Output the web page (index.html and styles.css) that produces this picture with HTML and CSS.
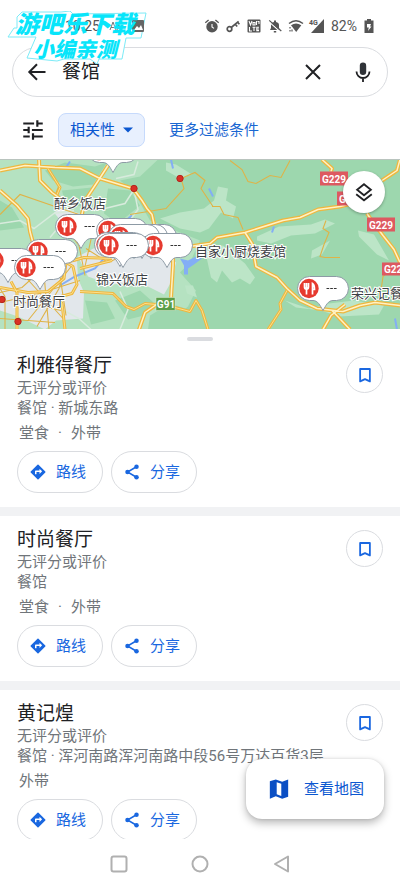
FILE: index.html
```html
<!DOCTYPE html>
<html lang="zh-CN">
<head>
<meta charset="utf-8">
<meta name="viewport" content="width=device-width, initial-scale=1">
<title>餐馆</title>
<link rel="stylesheet" href="styles.css">
</head>
<body>
<svg class="defs" aria-hidden="true">
  <defs>
    <symbol id="i-directions" viewBox="0 0 24 24"><path d="M21.7 11.3l-9-9a1 1 0 0 0-1.4 0l-9 9a1 1 0 0 0 0 1.4l9 9a1 1 0 0 0 1.4 0l9-9a1 1 0 0 0 0-1.4zM14 14.5V12h-4v3H8v-4c0-.6.4-1 1-1h5V7.500l3.500 3.500z" fill="currentColor"/></symbol>
    <symbol id="i-share" viewBox="0 0 24 24"><path d="M18 5L6 12l12 7" fill="none" stroke="currentColor" stroke-width="2"/><g fill="currentColor"><circle cx="18" cy="5" r="3"/><circle cx="6" cy="12" r="3"/><circle cx="18" cy="19" r="3"/></g></symbol>
    <symbol id="i-bookmark" viewBox="0 0 24 24"><path d="M5.500 4h13v16.500l-6.500-3-6.500 3z" fill="none" stroke="currentColor" stroke-width="2.400" stroke-linejoin="round"/></symbol>
    <g id="pin">
      <path d="M.5-12H27.500a12 12 0 0 1 0 24H24C19 12 17 17 14 22 11 17 9 12 4 12H.5a12 12 0 0 1 0-24z" fill="#fff" stroke="#8d9aa5"/>
      <circle r="9.700" fill="#e63a2f"/>
      <path d="M-4.500-5.500v4q0 2 2 2t2-2v-4M-2.500-5.500V6M3.500 6V-5q2 1 2 6h-2" fill="none" stroke="#fff" stroke-width="1.700"/>
      <path d="M17.500 0h2.700m1 0h2.700m1 0h2.700" stroke="#333" stroke-width="1.200"/>
    </g>
    <path id="roads" d="M0 170L25 165 55 167 80 168 100 178 133 188 142 200 147 208 152 214 155 228M39 159L40 180 52 192 60 198 65 207M108 165L97 182 85 200 79 227M0 190L17 205 28 218 30 231 34 246M190 246L210 243 217 237 245 232 283 220 300 217 318 209 340 206 360 201M367 213L371 219 383 235 394 249 400 262M382 180L397 170 400 159M245 232L252 243 256 266 277 277 287 288 300 300 317 308 343 311 360 305 375 302 400 305M332 310L350 329M323 329L331 315 345 304M173 255V265L171 298M158 303L145 312 139 329M322 159L332 168 331 171"/>
    <path id="streets" d="M287 290L280 303 281 309 268 329M80 291L113 293 126 306 134 309 145 303 156 304M175 307L190 311 196 300 202 310 208 329M11 281L17 292 17 329M0 287L28 292 48 291 64 278 66 262 84 257 112 258M66 262L73 266 77 284 72 293 57 297 62 303 65 329M80 268L112 260M48 168L60 187 57 194"/>
  </defs>
</svg>

<header class="header">
  <div class="status">
    <span class="time">10:25</span>
    <svg class="glyph status-text-icon" viewBox="0 0 14 14"><path d="M1 11L4 3l3 8M2 8.500h4M8 11l2-5 2 5M9 9.500h2.500" fill="none" stroke="#777"/></svg>
    <svg class="glyph status-picture" viewBox="0 0 14 14"><rect x="1" y="1" width="12" height="12" rx="1" fill="#666"/><path d="M3 11l3-4 2 2 2-3 2 5z" fill="#fff"/></svg>
    <div class="status-icons">
      <svg class="glyph" viewBox="0 0 14 14"><circle cx="7" cy="7.800" r="5.700" fill="#555"/><path d="M7 5v3l2 1.400" fill="none" stroke="#fff" stroke-width="1.100"/><path d="M.3 3.800L3.600 1M13.700 3.800L10.400 1" stroke="#555" stroke-width="1.300"/></svg>
      <svg class="glyph" viewBox="0 0 14 14"><g fill="none" stroke="#555" stroke-width="1.700"><circle cx="3.500" cy="10" r="2.300"/><path d="M5.200 8.500L12.600 2.300M9.200 5.200l2 2.300M11.600 3.200l1.800 2"/></g></svg>
      <svg class="glyph" viewBox="0 0 14 14"><rect x=".5" y=".5" width="13" height="13" rx="1" fill="#555"/><g fill="none" stroke="#fff" stroke-width="1.100"><path d="M2 2l1.500 4L5 2M6 3.500h2V6H6zM9.500 2v4M10.500 2.500H12V5M2.500 8v4H5M5.500 8.300h3M7 8v4M12 8.300H9.800v3.300H12M10 10h2"/></g></svg>
      <svg class="glyph" viewBox="0 0 14 14"><path d="M2 11h10l-1-2V6Q11 3.500 8 3V1.500H6V3Q3 3.500 3 6v3zM5.800 12h2.400v1.500H5.800z" fill="#555"/><path d="M.8 2.600L12.600 13" stroke="#fff" stroke-width="1.200"/><path d="M1.200 1.400L13.300 12" stroke="#555" stroke-width="1.200"/></svg>
      <svg class="glyph" viewBox="0 0 14 14"><path d="M0 4.500Q7-1 14 4.500" fill="none" stroke="#555" stroke-width="1.500"/><path d="M2 6.300Q7 2.500 12.300 6.300L7.200 13z" fill="#555"/><path d="M1 8v1.500M1 11v1.500M3 10.500v2" stroke="#555" stroke-width="1.200"/></svg>
      <svg class="glyph" viewBox="0 0 14 14"><path d="M14 0v14H1z" fill="#555"/><text class="net-label" x="-1" y="5.500">4G</text></svg>
      <span class="battery-text">82%</span>
      <svg class="glyph battery" viewBox="0 0 10 14"><path d="M3 0h4v1.500h2.500V14H.5V1.500H3z" fill="#555"/><path d="M3 5h4L6 7.500h1.500L4 12l.8-3.500H3z" fill="#fff"/></svg>
    </div>
  </div>

  <form class="search">
    <button type="button" class="icon-btn" aria-label="返回"><svg viewBox="0 0 24 24"><path d="M20.500 12H4.500M12 4.300L4.300 12l7.700 7.700" fill="none" stroke="#202124" stroke-width="2"/></svg></button>
    <input class="search-input" type="text" value="餐馆" aria-label="搜索">
    <button type="button" class="icon-btn" aria-label="清除"><svg viewBox="0 0 24 24"><path d="M5 5l14 14M19 5L5 19" stroke="#202124" stroke-width="2"/></svg></button>
    <button type="button" class="icon-btn" aria-label="语音搜索"><svg viewBox="0 0 24 24"><rect x="8.800" y="2.500" width="6.400" height="12.500" rx="3.200" fill="#303338"/><path d="M5.500 11.500a6.500 6.500 0 0 0 13 0M12 18v4" fill="none" stroke="#202124" stroke-width="1.800"/></svg></button>
  </form>

  <div class="filters">
    <button type="button" class="icon-btn tune" aria-label="过滤条件"><svg viewBox="0 0 24 24"><path d="M3 6h10M17 6h4M16 3v6M3 12h4M8 9v6M11 12h10M3 18h6M12 15v6M12 18h9" fill="none" stroke="#202124" stroke-width="2"/></svg></button>
    <div class="chip">
      <select class="chip-select" aria-label="排序方式"><option>相关性</option></select>
      <svg class="chip-arrow" viewBox="0 0 10 6"><path d="M0 .5h10L5 5.500z" fill="#0b57d0"/></svg>
    </div>
    <a class="more" href="#more">更多过滤条件</a>
  </div>

  <div class="watermark">
    <svg class="watermark-edge" viewBox="0 0 142 56"><path d="M10 6L15 1H54L63 0L66 3L139 2L134 27H119L115 48H92L90 53L83 48L57 48L50 50L20 47L29 26H1L7 17H10z" fill="#fff" stroke="#7cebf7" stroke-width="1"/></svg>
  </div>
  <div class="watermark watermark-text">
    <span class="wm-large">游吧乐下载</span>
    <span class="wm-small">小编亲测</span>
  </div>
</header>

<section class="map" aria-label="地图">
  <svg class="map-canvas" viewBox="0 159 400 170" preserveAspectRatio="xMidYMid slice">
    <rect y="159" width="400" height="170" fill="#9dd7ae"/>
    <path d="M0 159H158L140 176L120 180L133 190L150 220L200 240L190 262L180 272L196 290L188 306L160 329H0z" fill="#b5e2c1"/>
    <g fill="#9dd7ae">
      <path d="M45 170l20-8 30 4 12-4-14 22-20 2-20-6zM62 190l30-3-8 18-18 2zM0 200l12 7 12 20-24 3zM108 188l22 2 10 15-22 18-14-10zM142 200l20-10 38-12v60l-36-12zM115 300l25-10 18 16-18 10-12 3zM150 315l20-12 30 10v16h-52zM85 300l22 2 8 16-24 6z"/>
    </g>
    <g fill="#bce5c7">
      <path d="M160 218l20-6 24-4 10-8 4-14 10 2-2 12 10 6-3 12-12-6-12 16-9 4-20-4zM257 236l22-10 32-2 14-5 10 4-20 10-24 2-20 8-14-3zM205 250l18-5 22 18 10 14-5 7-10-6-8 4-10-12-5 12-6-5zM312 250l18-10-8 14-11 4zM358 230l16 4 15 26-12-6-18-18zM285 300l24 8 20-5 25-3 30 5-5 9-40 2-18-6-25-3zM166 162l10 2 16 10-12 4-14-8zM185 285l8 0 4 12-10-4z"/>
    </g>
    <g fill="#e2e7eb">
      <path d="M0 252L40 252 77 260 78 278 84 292 83 318 56 320 45 329 18 316 0 310z"/>
      <path d="M78 256L105 242H150L166 255L176 262L172 280L164 294L140 282L110 284L88 276z"/>
      <path d="M54 212l8-5 20 7 8 12-16 4-12-8z"/>
    </g>
    <g fill="none" stroke="#83aef5" stroke-width="2"><path d="M60 285l15-9 20-8 18-20 16-10M66 167l4-6M126 220l6-5M171 159l2 9"/><path d="M180 258l8 2 8-4 6 2-8 6-6 4v6h-4v-9z" fill="#83aef5" stroke="none"/><path d="M209 188l4 8M272 232l2-6M395 318l2 11"/></g>
    <g fill="none" stroke="#d8ebdd" stroke-width="1.500"><path d="M0 223l20-3 14 8 20-15 20-3M116 178l18-4 4-13M105 208l20-5 9-14 4 20-12 16M64 310l15 8 12 11M120 291l8 18-8 20M60 225l-10 12"/></g>
    <g fill="none" stroke="#dfb347" stroke-width="1.100">
      <path d="M0 214l20-20 35 12 30 10M48 170l11 15-4 10M130 214l36-6 18-20-3-10M181 178l14-6 10 8-4 8 12 18M230 160l12 9 6 12 8 2 14-8 11 2 9-17M212 206l8 0 4 8 14 3 5 12M326 220l-3 8 6 4-5 12-4 12 5 1h15M381 290l2-14 8-8"/>
      <path d="M0 292l22-5 21-19 34-18M5 329V296l-5-8M0 318l55 4M16 300l45 10M42 252l7 77M25 276l38 42M28 320l44-55M0 270l77-10M58 262l8 53M69 252l-10 36-22 38M80 280l-44 14-36 8M70 233l9 12 6 30M86 248l22 14 30-13M93 230l-8 36"/>
    </g>
    <g fill="none" stroke-linejoin="round">
      <use href="#streets" stroke="#eeb73f" stroke-width="3"/>
      <use href="#roads" stroke="#eeb73f" stroke-width="4"/>
      <use href="#streets" stroke="#fbe08d" stroke-width="1"/>
      <use href="#roads" stroke="#fff2c4" stroke-width="1.500"/>
    </g>
    <g fill="#d93025" stroke="#b3261e"><circle cx="134" cy="188" r="3.200"/><circle cx="180" cy="178" r="3.200"/><circle cx="2" cy="299" r="3.200"/><circle cx="18" cy="321" r="3.200"/></g>

    <g fill="#dd5960"><rect x="320" y="171" width="28" height="14"/><rect x="337" y="191" width="28" height="14"/><rect x="367" y="217" width="28" height="14"/><rect x="382" y="262" width="28" height="13"/></g>
    <rect x="156" y="297" width="19" height="13" fill="#5a9e48" stroke="#d9ead3" stroke-width=".5"/>
    <g class="shield-text"><text x="334" y="182">G229</text><text x="351" y="202">G229</text><text x="381" y="228">G229</text><text x="396" y="272">G229</text><text x="166" y="307">G91</text></g>

    <use href="#pin" x="99" y="150"/>
    <use href="#pin" x="67" y="226"/>
    <use href="#pin" x="108" y="230"/>
    <use href="#pin" x="137" y="236"/>
    <use href="#pin" x="128" y="236"/>
    <use href="#pin" x="120" y="236"/>
    <use href="#pin" x="153" y="245"/>
    <use href="#pin" x="106" y="244"/>
    <use href="#pin" x="109" y="245"/>
    <use href="#pin" x="38" y="251"/>
    <use href="#pin" x="-6" y="260"/>
    <use href="#pin" x="26" y="267"/>
    <use href="#pin" x="309" y="288"/>

    <g class="place-text"><text x="54" y="207">醉乡饭店</text><text x="96" y="283">锦兴饭店</text><text x="13" y="305">时尚餐厅</text><text x="195" y="255">自家小厨烧麦馆</text><text x="351" y="297">荣兴记餐</text></g>
  </svg>
  <button type="button" class="layers" aria-label="图层"><svg viewBox="0 0 24 24"><path d="M12 3.500l7.500 6-7.500 6-7.500-6zM3.500 14.500L12 21l8.500-6.500" fill="none" stroke="#202124" stroke-width="2"/></svg></button>
</section>

<main class="results">
  <div class="handle"></div>
  <article class="card">
    <div class="info">
      <h2 class="name">利雅得餐厅</h2>
      <p class="meta">无评分或评价</p>
      <p class="meta">餐馆 · 新城东路</p>
      <p class="services"><span>堂食</span><span>·</span><span>外带</span></p>
    </div>
    <button type="button" class="save" aria-label="保存"><svg><use href="#i-bookmark"/></svg></button>
    <div class="actions">
      <button type="button" class="pill"><svg><use href="#i-directions"/></svg>路线</button>
      <button type="button" class="pill"><svg><use href="#i-share"/></svg>分享</button>
    </div>
  </article>
  <article class="card">
    <div class="info">
      <h2 class="name">时尚餐厅</h2>
      <p class="meta">无评分或评价</p>
      <p class="meta">餐馆</p>
      <p class="services"><span>堂食</span><span>·</span><span>外带</span></p>
    </div>
    <button type="button" class="save" aria-label="保存"><svg><use href="#i-bookmark"/></svg></button>
    <div class="actions">
      <button type="button" class="pill"><svg><use href="#i-directions"/></svg>路线</button>
      <button type="button" class="pill"><svg><use href="#i-share"/></svg>分享</button>
    </div>
  </article>
  <article class="card">
    <div class="info">
      <h2 class="name">黄记煌</h2>
      <p class="meta">无评分或评价</p>
      <p class="meta">餐馆 · 浑河南路浑河南路中段56号万达百货3层</p>
      <p class="services"><span>外带</span></p>
    </div>
    <button type="button" class="save" aria-label="保存"><svg><use href="#i-bookmark"/></svg></button>
    <div class="actions">
      <button type="button" class="pill"><svg><use href="#i-directions"/></svg>路线</button>
      <button type="button" class="pill"><svg><use href="#i-share"/></svg>分享</button>
    </div>
  </article>
</main>

<button type="button" class="fab"><svg viewBox="0 0 24 24"><path fill-rule="evenodd" d="M2 3.500L8.500 1.500 15.500 4 22 1.500V20.500L15.500 22.500 8.500 20 2 22.500zM9.500 4.500V17.800L14.500 19.500V6.200z" fill="#0b4fc4"/></svg>查看地图</button>

<nav class="sysnav" aria-label="系统导航">
  <button type="button" class="icon-btn" aria-label="最近"><svg viewBox="0 0 18 18"><rect x="1.500" y="1.500" width="15" height="15" rx="2"/></svg></button>
  <button type="button" class="icon-btn" aria-label="主页"><svg viewBox="0 0 18 18"><circle cx="9" cy="9" r="7.500"/></svg></button>
  <button type="button" class="icon-btn" aria-label="后退"><svg viewBox="0 0 18 18"><path d="M16 1.500v15L3 9z" stroke-linejoin="round"/></svg></button>
</nav>
</body>
</html>
```

FILE: styles.css
```css
* {
  box-sizing: border-box;
}

body {
  position: relative;
  display: flex;
  flex-direction: column;
  height: 100vh;
  margin: 0;
  overflow: hidden;
  background: #fff;
  color: #202124;
  font: 15px/20px Roboto, "Noto Sans CJK SC", sans-serif;
}

.defs {
  position: absolute;
  width: 0;
  height: 0;
}

button {
  padding: 0;
  border: 0;
  background: none;
  color: inherit;
  font: inherit;
}

svg {
  display: block;
}

/* header */
.header {
  position: relative;
  flex: none;
}

.status {
  position: relative;
  z-index: 2;
  display: flex;
  align-items: center;
  height: 47px;
  padding: 4px 26px 0 65px;
  color: #555;
}

.time {
  font-size: 14px;
}

.glyph {
  flex: none;
  width: 14px;
  height: 14px;
  overflow: visible;
}

.status-text-icon {
  margin-left: 9px;
}

.status-picture {
  margin-left: 8px;
}

.status-icons {
  display: flex;
  align-items: center;
  gap: 7px;
  margin-left: auto;
}

.net-label {
  font-size: 7px;
  font-weight: 700;
  fill: #555;
}

.battery-text {
  font-size: 14px;
}

.battery {
  width: 10px;
}

.search {
  display: flex;
  align-items: center;
  height: 50px;
  margin: 0 12px;
  padding: 0 12px;
  border: 1px solid #dadce0;
  border-radius: 25px;
}

.icon-btn {
  flex: none;
  width: 24px;
}

.search-input {
  flex: 1;
  min-width: 0;
  margin-left: 13px;
  padding: 0;
  border: 0;
  outline: 0;
  background: none;
  color: #202124;
  font: inherit;
  font-size: 19px;
}

.search .icon-btn + .icon-btn {
  margin-left: 26px;
}

.filters {
  display: flex;
  align-items: center;
  padding: 16px 20px 12px;
}

.tune {
  width: 26px;
  margin-right: 12px;
}

.chip {
  display: flex;
  align-items: center;
  position: relative;
  height: 34px;
  border: 1px solid #c6dafc;
  border-radius: 8px;
  background: #e8f0fe;
}

.chip-select {
  height: 32px;
  padding: 0 28px 0 11px;
  border: 0;
  appearance: none;
  background: none;
  color: #0b57d0;
  font: inherit;
}

.chip-arrow {
  position: absolute;
  right: 11px;
  width: 10px;
  height: 6px;
  pointer-events: none;
}

.more {
  margin-left: 24px;
  color: #1967d2;
  text-decoration: none;
}

.watermark {
  position: absolute;
  z-index: 1;
  top: 11px;
  left: 7px;
  width: 142px;
}

.watermark-text {
  z-index: 3;
  display: flex;
  flex-direction: column;
  padding-left: 8px;
  color: #08e5fa;
  font-style: italic;
  font-weight: 900;
  white-space: nowrap;
}

.wm-large {
  font-size: 24px;
  line-height: 28px;
}

.wm-small {
  padding-left: 18px;
  font-size: 21px;
  line-height: 22px;
}

/* map */
.map {
  position: relative;
  flex: none;
  border-top: 1px solid #b9c4be;
}

.map-canvas {
  width: 100%;
  height: 169px;
}

.shield-text {
  fill: #fff;
  font-size: 10px;
  font-weight: 700;
  text-anchor: middle;
}

.place-text {
  fill: #3c4043;
  stroke: #fff;
  stroke-width: 2px;
  paint-order: stroke;
  font-size: 13px;
}

.layers {
  position: absolute;
  top: 11px;
  right: 15px;
  display: grid;
  place-items: center;
  width: 42px;
  height: 42px;
  border-radius: 50%;
  background: #fff;
  box-shadow: 0 1px 3px rgb(0 0 0 / 30%);
}

.layers svg {
  width: 22px;
}

/* result list */
.results {
  flex: 1;
  min-height: 0;
  overflow: hidden;
}

.handle {
  width: 26px;
  height: 4px;
  margin: 8px auto 1px;
  border-radius: 2px;
  background: #dadce0;
}

.card {
  display: grid;
  grid-template-columns: 1fr auto;
  align-items: start;
  padding: 12px 17px 14px;
  border-bottom: 9px solid #f1f2f4;
}

.info {
  min-width: 0;
}

.name {
  margin: 0;
  font-size: 19px;
  font-weight: 400;
  line-height: 24px;
}

.meta,
.services {
  margin: 0;
  color: #70757a;
}

.meta {
  white-space: nowrap;
}

.services {
  display: flex;
  gap: 9px;
  padding: 5px 2px 8px;
}

.save {
  display: grid;
  place-items: center;
  width: 37px;
  height: 37px;
  margin-top: 2px;
  border: 1px solid #dadce0;
  border-radius: 50%;
  color: #1a67e0;
}

.save svg {
  width: 18px;
  height: 18px;
}

.actions {
  grid-column: 1 / -1;
  display: flex;
  gap: 8px;
}

.pill {
  display: flex;
  align-items: center;
  gap: 9px;
  height: 42px;
  padding: 0 16px 0 11px;
  border: 1px solid #dadce0;
  border-radius: 21px;
  color: #1967e0;
}

.pill svg {
  width: 18px;
  height: 18px;
}

.fab {
  position: absolute;
  right: 16px;
  bottom: 70px;
  display: flex;
  align-items: center;
  gap: 14px;
  height: 60px;
  padding: 0 20px 0 22px;
  border-radius: 16px;
  background: #fff;
  box-shadow: 0 4px 8px rgb(0 0 0 / 28%), 0 0 3px rgb(0 0 0 / 12%);
  color: #0b57d0;
}

.fab svg {
  width: 22px;
}

/* system navigation */
.sysnav {
  display: flex;
  flex: none;
  align-items: center;
  justify-content: center;
  gap: 63px;
  height: 50px;
}

.sysnav .icon-btn {
  width: 18px;
}

.sysnav svg {
  fill: none;
  stroke: #b0b0b0;
  stroke-width: 2px;
}
```
